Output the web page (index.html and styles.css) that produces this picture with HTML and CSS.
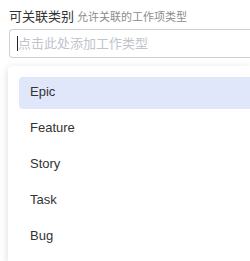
FILE: index.html
```html
<!DOCTYPE html>
<html lang="zh-CN">
<head>
<meta charset="utf-8" />
<title>可关联类别</title>
<link rel="stylesheet" href="styles.css">
</head>
<body>
<div class="field">
  <div class="label">可关联类别 <span class="hint">允许关联的工作项类型</span></div>
  <div class="picker"><span class="caret"></span><span class="placeholder">点击此处添加工作类型</span></div>
</div>
<div class="dropdown">
  <ul class="options">
    <li class="active">Epic</li>
    <li>Feature</li>
    <li>Story</li>
    <li>Task</li>
    <li>Bug</li>
  </ul>
</div>
</body>
</html>
```

FILE: styles.css
```css
html, body { margin: 0; padding: 0; background: #fff; overflow: hidden; }
body { font-family: "Liberation Sans", Arial, "Noto Sans CJK SC", sans-serif; color: #333; width: 250px; height: 261px; }

.field { padding: 7px 0 0 9px; }
.label { font-family: "Noto Sans CJK SC", sans-serif; font-size: 13px; line-height: 17px; color: #333; }
.hint { font-size: 11px; color: #8c8c8c; }

.picker { margin-top: 4px; height: 27px; border: 1px solid #d0d0d0; border-right: none; border-radius: 4px 0 0 4px;
  display: flex; align-items: center; padding-left: 7px; }
.caret { width: 1px; height: 15px; background: #222; }
.placeholder { font-family: "Noto Sans CJK SC", sans-serif; font-size: 13px; color: #c0c4cc; margin-top: -2px; }

.dropdown { margin: 8px 0 0 8px; height: 184px; background: #fff; border-radius: 4px 0 0 0;
  box-shadow: 0 2px 8px rgba(0, 0, 0, 0.15); padding: 11px 0 0 11px; }
.options { list-style: none; margin: 0; padding: 0; }
.options li { height: 32px; line-height: 30px; margin-bottom: 4px; padding-left: 11px; font-size: 13px; color: #333; border-radius: 4px 0 0 4px; }
.options li.active { background: #e1e7fb; }
```
